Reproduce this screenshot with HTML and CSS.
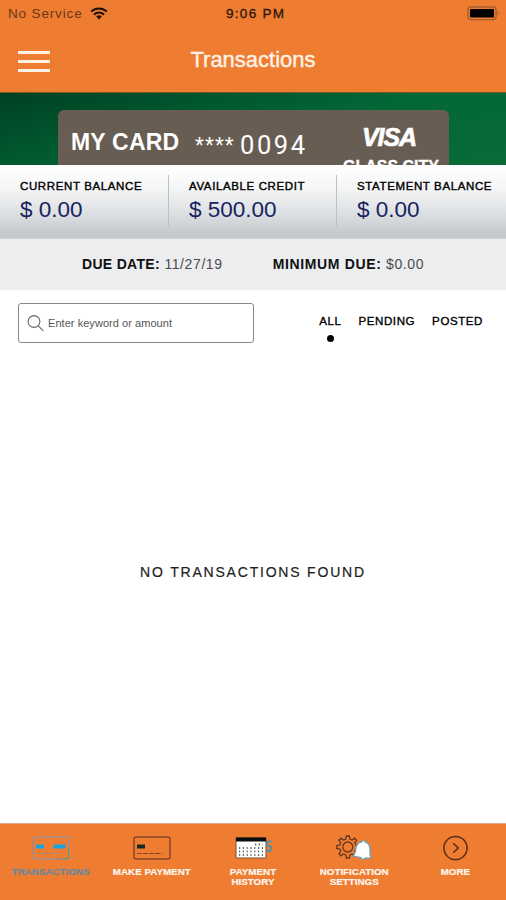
FILE: index.html
```html
<!DOCTYPE html>
<html lang="en">
<head>
<meta charset="utf-8">
<title>Transactions</title>
<link rel="stylesheet" href="styles.css">
</head>
<body>
<div class="app">
  <header class="top">
    <div class="status">
      <div class="carrier"><span class="carrier-name">No Service</span>
        <svg class="wifi" width="18" height="13" viewBox="0 0 18 13" fill="none" stroke="#20100a" stroke-width="2.1"><path d="M1.2 4.6C5.6.4 12.4.4 16.8 4.6M4 7.6c3-2.7 7-2.7 10 0"/><path d="M6.2 9.4c1.7-1.4 3.9-1.4 5.6 0L9 12.4z" fill="#20100a" stroke="none"/></svg>
      </div>
      <div class="clock">9:06 PM</div>
      <svg class="battery" width="33" height="15" viewBox="0 0 33 15"><rect x="1" y="1" width="28" height="12.6" rx="3" fill="none" stroke="#a85e2c" stroke-width="1.4"/><rect x="3" y="3" width="24" height="8.6" rx="1" fill="#000"/><path d="M30.5 5v4.5q2-2.2 0-4.500" fill="#a85e2c"/></svg>
    </div>
    <div class="bar">
      <div class="menu"><i></i><i></i><i></i></div>
      <h1>Transactions</h1>
    </div>
  </header>
  <section class="hero">
    <div class="card">
      <div class="card-row"><span class="card-name">MY CARD</span><span class="stars">****</span><span class="digits">0094</span><span class="visa">VISA</span></div>
      <div class="bank">GLASS CITY</div>
    </div>
  </section>
  <section class="balances">
    <div class="balance"><div class="label">CURRENT BALANCE</div><div class="amount">$ 0.00</div></div>
    <div class="balance"><div class="label">AVAILABLE CREDIT</div><div class="amount">$ 500.00</div></div>
    <div class="balance"><div class="label">STATEMENT BALANCE</div><div class="amount">$ 0.00</div></div>
  </section>
  <section class="due">
    <div class="due-date"><b>DUE DATE:</b> 11/27/19</div>
    <div class="due-min"><b>MINIMUM DUE:</b> $0.00</div>
  </section>
  <section class="filters">
    <div class="search">
      <svg width="18" height="18" viewBox="0 0 18 18" fill="none" stroke="#666" stroke-width="1.1"><circle cx="7" cy="7.500" r="5.900"/><path d="M11.300 11.800l5 5"/></svg>
      <span>Enter keyword or amount</span>
    </div>
    <div class="tabs"><span class="tab active">ALL</span><span class="tab">PENDING</span><span class="tab">POSTED</span></div>
  </section>
  <main class="empty">NO TRANSACTIONS FOUND</main>
  <nav class="nav">
    <div class="item current">
      <svg width="40" height="26" viewBox="0 0 40 26"><rect x="2" y="2" width="36" height="22" rx="2" fill="none" stroke="#a18c87" stroke-width="1.500"/><path d="M37.500 13v10.500H31" fill="none" stroke="#5e9b72"/><path d="M5 9.500h8v4H5zM23 9.500h12l-1 4H22z" fill="#16a3e2"/><path d="M6 18.500h24" stroke="#a18c87" stroke-dasharray="5 1"/></svg>
      <span>TRANSACTIONS</span>
    </div>
    <div class="item">
      <svg width="40" height="26" viewBox="0 0 40 26"><rect x="2" y="2" width="36" height="22" rx="2" fill="none" stroke="#8a4422" stroke-width="1.500"/><path d="M5 9.500h8v4H5z" fill="#132b25"/><path d="M5 18.500h25" stroke="#8a4422" stroke-dasharray="5 1"/></svg>
      <span>MAKE PAYMENT</span>
    </div>
    <div class="item">
      <svg width="40" height="26" viewBox="0 0 40 26"><rect x="3" y="3" width="30" height="20" fill="#fff" stroke="#7b503a" stroke-width="1"/><path d="M3 2.500h30v4H3z" fill="#080d10"/><path d="M22 9.500h8M6 13h24M6 16.500h24M6 20h24" stroke="#6c6c6c" stroke-width="2" stroke-dasharray="1.200 2.600"/><path d="M38.500 6.500c-6-1.500-6.500 4-2.500 4.500s3 6.500-3 4.500" fill="none" stroke="#2994c6" stroke-width="1.600"/></svg>
      <span>PAYMENT<br>HISTORY</span>
    </div>
    <div class="item">
      <svg width="40" height="26" viewBox="0 0 40 26"><g transform="translate(-.5)" fill="none" stroke="#653620" stroke-width="1.300"><path d="M12.300 4l.5-3h3l.5 3 2.300 1 2.500-1.800 2 2.100-1.800 2.500 1 2.200 3 .5v3l-3 .5-1 2.300 1.800 2.500-2 2-2.500-1.800-2.300 1-.5 3h-3l-.5-3-2.300-1-2.500 1.800-2-2 1.800-2.500-1-2.300-3-.5v-3l3-.5 1-2.200-1.800-2.500 2-2.100L10 5z"/><circle cx="14.300" cy="12" r="5"/></g><path d="M19 21c3-2 2-6 4-11 1-2 3-3 5-3 0-2 3-2 3 0 4 1 5 4 5 8 0 3-.5 5 1 8l-6 0c-1 2-3 2-4-.5z" fill="#fff" stroke="#62a3bf" stroke-width="1.200"/></svg>
      <span>NOTIFICATION<br>SETTINGS</span>
    </div>
    <div class="item">
      <svg width="40" height="26" viewBox="0 0 40 26" fill="none" stroke="#52301d" stroke-width="1.500"><circle cx="20.500" cy="13" r="11.600"/><path d="M18.200 8.300l5 4.700-5 4.700"/></svg>
      <span>MORE</span>
    </div>
  </nav>
</div>
</body>
</html>
```

FILE: styles.css
```css
* { box-sizing: border-box; }
body { margin: 0; font-family: "Liberation Sans", Arial, sans-serif; background: #fff; color: #000; }
.app { width: 506px; height: 900px; display: flex; flex-direction: column; overflow: hidden; }
.top { height: 93px; background: #ee7d31; border-bottom: 1px solid #755a22; flex: none; }
.status { height: 27px; display: grid; grid-template-columns: 218px 1fr auto; align-items: center; padding: 0 6px 0 8px; }
.carrier { display: flex; align-items: center; gap: 7px; color: #6b3819; font-size: 13.500px; padding-bottom: 1px; }
.carrier-name { letter-spacing: .85px; width: 75px; white-space: nowrap; }
.clock { font-size: 13.500px; letter-spacing: 1.300px; color: #2b1609; -webkit-text-stroke: .3px #2b1609; padding-bottom: 1px; }
.battery { margin-bottom: 1px; }
.bar { height: 65px; display: grid; grid-template-columns: 1fr auto 1fr; align-items: center; padding: 0 18px; }
.menu { display: flex; flex-direction: column; gap: 6px; width: 32px; margin-top: 4px; }
.menu i { height: 3px; background: #fff3e8; }
h1 { margin: 0; color: #fff1e6; font-size: 22px; line-height: 26px; font-weight: 400; -webkit-text-stroke: .4px #fff1e6; }
.hero { height: 72px; flex: none; padding: 17px 57px 0 58px; background: linear-gradient(165deg, #004023 0, #00552d 28%, #036736 55%, #086b38 100%); overflow: hidden; }
.card { height: 80px; background: #685d52; border-radius: 6px; color: #fff; overflow: hidden; }
.card-row { height: 48px; padding: 9px 0 0 13px; display: flex; }
.card-name { width: 124px; font-size: 23px; line-height: 46px; font-weight: 700; white-space: nowrap; letter-spacing: .2px; }
.stars { width: 45px; font-size: 23px; line-height: 55px; letter-spacing: 1px; }
.digits { width: 122px; font-family: Roboto, sans-serif; font-size: 25.500px; line-height: 53px; letter-spacing: 2.600px; }
.visa { font-family: "Liberation Sans", Arial, sans-serif; font-size: 25px; line-height: 36px; font-weight: 700; font-style: italic; letter-spacing: -1.100px; -webkit-text-stroke: .7px #fff; }
.bank { text-align: right; padding-right: 10px; font-size: 16px; font-weight: 700; line-height: 18px; white-space: nowrap; -webkit-text-stroke: .3px #fff; }
.balances { height: 74px; flex: none; display: grid; grid-template-columns: 169px 168px 169px; background: linear-gradient(#fff 0, #f5f6f7 30%, #dde0e3 65%, #c1c6ca 97%, #d2d7da 100%); padding: 10px 0; }
.balance { padding: 4px 0 0 20px; border-right: 1px solid #bcc0c2; white-space: nowrap; height: 51px; }
.balance:last-child { border: 0; }
.label { font-size: 11.500px; line-height: 14px; letter-spacing: .62px; -webkit-text-stroke: .4px #000; }
.amount { font-size: 22.500px; line-height: 33px; color: #17235f; }
.due { height: 51px; flex: none; background: #ecedef; display: flex; align-items: center; padding: 0 0 1px 82px; gap: 50px; color: #4c4c4c; font-size: 14px; letter-spacing: .6px; white-space: nowrap; }
.due b { color: #111; letter-spacing: .3px; }
.due-min b { letter-spacing: .65px; }
.filters { display: flex; justify-content: space-between; padding: 13px 23px 0 18px; flex: none; }
.search { width: 236px; height: 40px; border: 1px solid #888; border-radius: 3px; display: flex; align-items: center; padding-left: 8px; gap: 3px; color: #555; font-size: 11px; letter-spacing: .05px; }
.tabs { display: flex; gap: 17px; font-size: 11.500px; padding-top: 11px; line-height: 15px; letter-spacing: .6px; -webkit-text-stroke: .35px #000; }
.active { display: flex; flex-direction: column; align-items: center; }
.active::after { content: ""; width: 7px; height: 7px; border-radius: 50%; background: #000; margin-top: 6px; }
.empty { flex: 1; text-align: center; padding-top: 220px; font-size: 14px; line-height: 18px; letter-spacing: 1.800px; color: #222; -webkit-text-stroke: .2px #222; }
.nav { height: 77px; flex: none; background: #ee7d31; border-top: 1px solid #dcaa88; display: grid; grid-template-columns: repeat(5, 1fr); padding-top: 11px; }
.item { display: flex; flex-direction: column; align-items: center; color: #fff5ec; font-size: 9.800px; font-weight: 700; line-height: 10px; text-align: center; gap: 6px; white-space: nowrap; -webkit-text-stroke: .2px currentColor; }
.current { color: #6688a1; }
```
